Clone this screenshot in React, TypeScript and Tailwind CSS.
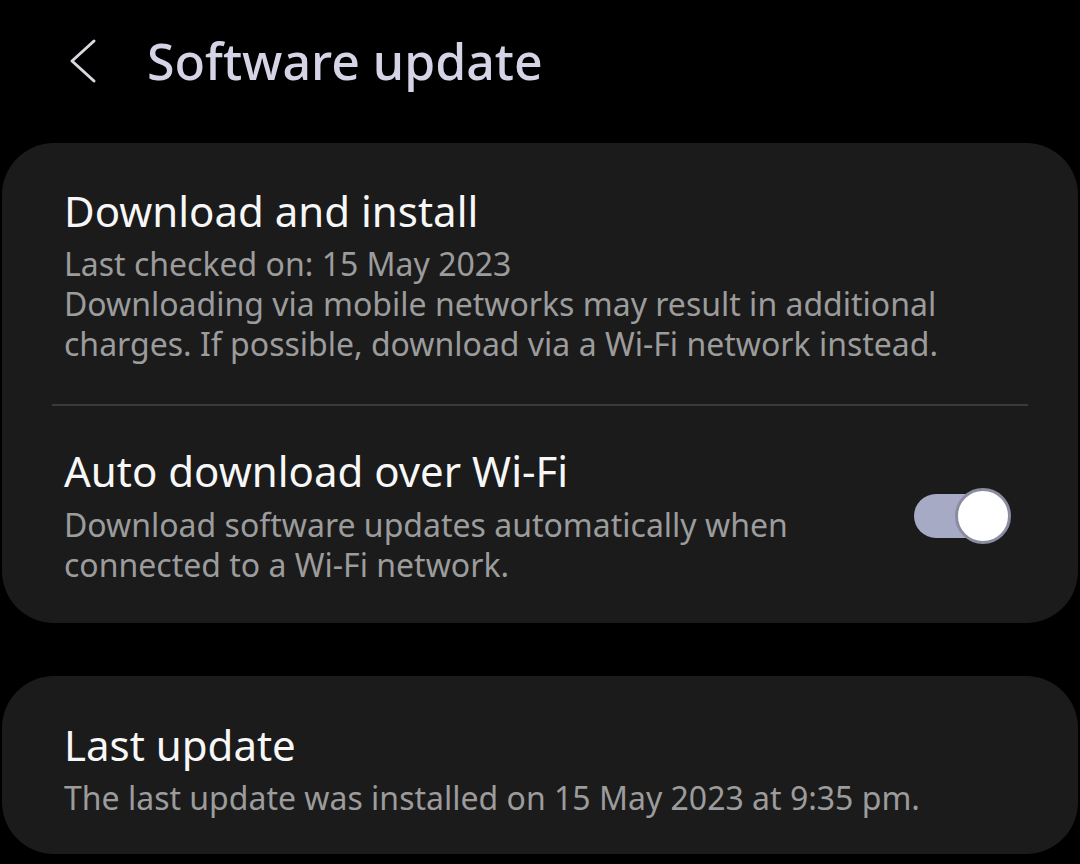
import React, { useState } from 'react';

const font = { fontFamily: '"Noto Sans", "Open Sans", sans-serif' };

const Toggle = ({ on, onChange }: { on: boolean; onChange: () => void }) => {
  return (
    <button
      onClick={onChange}
      className="relative h-[56px] w-[96px] shrink-0"
      aria-pressed={on}
    >
      <span
        className={`absolute left-0 top-[6px] h-[44px] w-[88px] rounded-full ${on ? 'bg-[#a6aac4]' : 'bg-[#5a5a5a]'}`}
      />
      <span
        className={`absolute top-0 h-[56px] w-[56px] rounded-full border-[3px] border-[#8a8ca0] bg-white ${on ? 'left-[41px]' : 'left-0'}`}
      />
    </button>
  );
};

const App = () => {
  const [auto, setAuto] = useState<boolean>(true);

  return (
    <div className="min-h-[864px] w-full bg-black text-white" style={font}>
      {/* header */}
      <div className="flex h-[122px] flex-row items-center pl-[66px]">
        <svg width="32" height="46" viewBox="0 0 32 46" fill="none">
          <path d="M28 3 L6 23 L28 43" stroke="#d8d8e0" strokeWidth="3" strokeLinecap="round" strokeLinejoin="round" />
        </svg>
        <span className="ml-[49px] text-[50px] font-medium leading-none text-[#d4d4e6]">
          Software update
        </span>
      </div>

      {/* updates card */}
      <div className="mx-[2px] mt-[21px] rounded-[52px] bg-[#1b1b1b]">
        <div className="px-[62px] pb-[40px] pt-[44px]">
          <div className="text-[42px] leading-[48px] text-[#f7f7f7]">Download and install</div>
          <div className="mt-[9px] text-[32px] leading-[40px] text-[#9c9c9c]">
            Last checked on: 15 May 2023
            <br />
            Downloading via mobile networks may result in additional
            <br />
            charges. If possible, download via a Wi-Fi network instead.
          </div>
        </div>
        <div className="mx-[50px] h-[2px] bg-[#3a3a3a]" />
        <div className="flex flex-row items-center justify-between pb-[38px] pl-[62px] pr-[68px] pt-[41px]">
          <div>
            <div className="text-[42px] leading-[48px] text-[#f7f7f7]">Auto download over Wi-Fi</div>
            <div className="mt-[10px] text-[32px] leading-[40px] text-[#9c9c9c]">
              Download software updates automatically when
              <br />
              connected to a Wi-Fi network.
            </div>
          </div>
          <Toggle on={auto} onChange={() => setAuto(!auto)} />
        </div>
      </div>

      {/* last update card */}
      <div className="mx-[2px] mt-[53px] rounded-[52px] bg-[#1b1b1b] px-[62px] pb-[36px] pt-[45px]">
        <div className="text-[42px] leading-[48px] text-[#f7f7f7]">Last update</div>
        <div className="mt-[9px] text-[32px] leading-[40px] text-[#9c9c9c]">
          The last update was installed on 15 May 2023 at 9:35 pm.
        </div>
      </div>
    </div>
  );
};

export default App;
